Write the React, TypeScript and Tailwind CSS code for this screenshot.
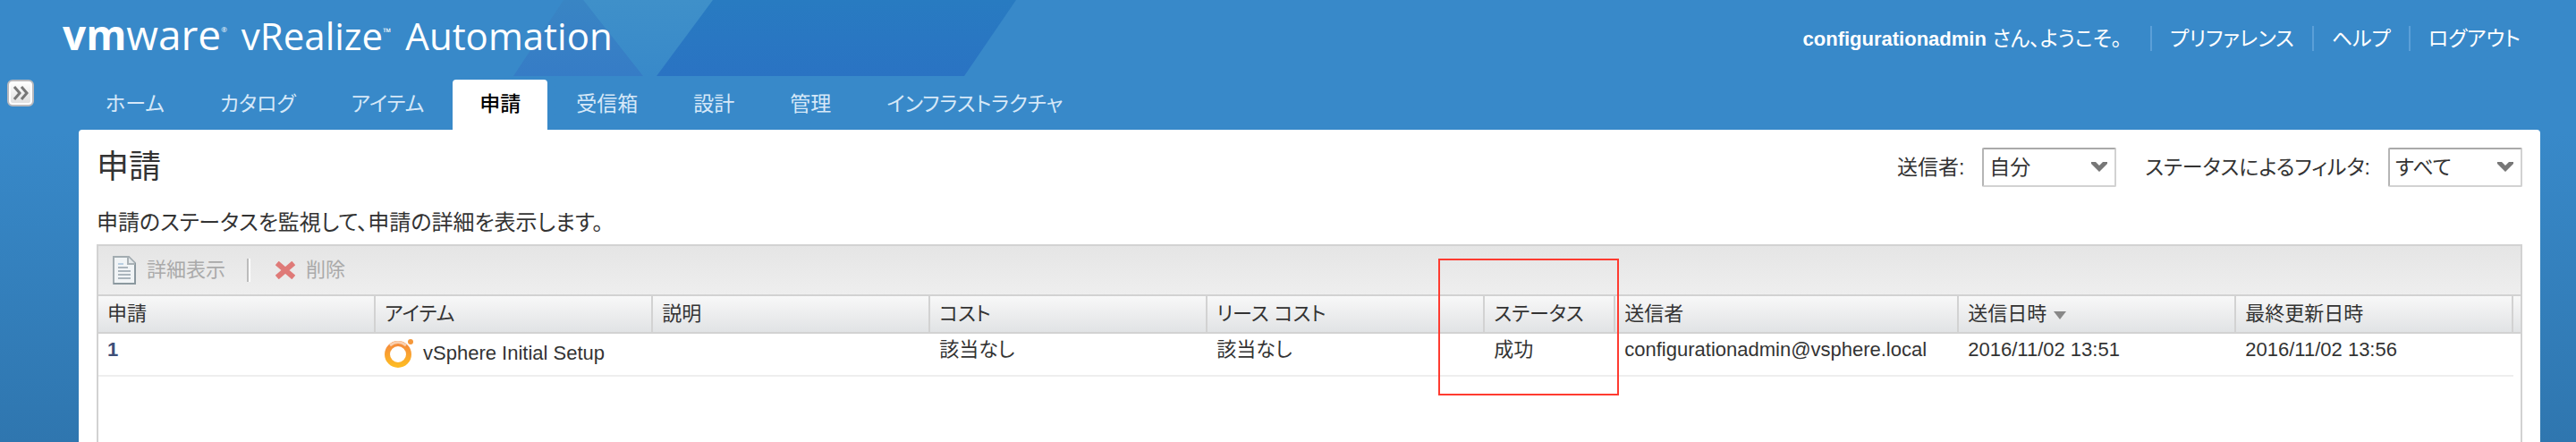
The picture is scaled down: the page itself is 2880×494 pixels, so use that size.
import * as React from "react";

interface Column {
  label: string;
  width: string;
  sorted?: boolean;
  marked?: boolean;
}

const tabs = [
  { label: "ホーム" },
  { label: "カタログ" },
  { label: "アイテム" },
  { label: "申請", active: true },
  { label: "受信箱" },
  { label: "設計" },
  { label: "管理" },
  { label: "インフラストラクチャ" },
];

const columns: Column[] = [
  { label: "申請", width: "w-[11.45%]" },
  { label: "アイテム", width: "w-[11.45%]" },
  { label: "説明", width: "w-[11.45%]" },
  { label: "コスト", width: "w-[11.45%]" },
  { label: "リース コスト", width: "w-[11.45%]" },
  { label: "ステータス", width: "w-[5.39%]", marked: true },
  { label: "送信者", width: "w-[14.18%]" },
  { label: "送信日時", width: "w-[11.45%]", sorted: true },
  { label: "最終更新日時", width: "w-[11.45%]" },
];

const requests = [
  {
    id: "1",
    item: "vSphere Initial Setup",
    description: "",
    cost: "該当なし",
    leaseCost: "該当なし",
    status: "成功",
    submitter: "configurationadmin@vsphere.local",
    submitted: "2016/11/02 13:51",
    updated: "2016/11/02 13:56",
  },
];

function HeaderShapes() {
  return (
    <svg className="absolute top-0 left-[574px]" width="600" height="85" viewBox="0 0 600 85" aria-hidden="true">
      <defs>
        <linearGradient id="small" x1="0" y1="0" x2="0" y2="1">
          <stop offset="0" stopColor="#3985c4" />
          <stop offset="1" stopColor="#367cc6" />
        </linearGradient>
        <linearGradient id="large" x1="0" y1="0" x2="0" y2="1">
          <stop offset="0" stopColor="#287bc1" />
          <stop offset="1" stopColor="#2a73c3" />
        </linearGradient>
        <linearGradient id="light" x1="0" y1="0" x2="0" y2="1">
          <stop offset="0" stopColor="#3f90c9" />
          <stop offset="1" stopColor="#3889c9" />
        </linearGradient>
      </defs>
      <polygon points="78,0 223,0 161,85 145,85" fill="url(#light)" />
      <polygon points="56,0 78,0 145,85 0,85" fill="url(#small)" />
      <polygon points="223,0 562,0 504,85 160,85" fill="url(#large)" />
    </svg>
  );
}

function DocumentIcon() {
  return (
    <svg width="26" height="32" viewBox="0 0 26 32" aria-hidden="true">
      <path d="M1 1H18L25 8V31H1Z" fill="#f1f4f6" stroke="#a3acb1" strokeWidth="2" />
      <path d="M25 8V31H1" fill="none" stroke="#8b989f" strokeWidth="2" />
      <path d="M17 1V9H25" fill="#e4e8ea" stroke="#a9b1b6" strokeWidth="2" />
      <path d="M6 9H12" stroke="#b9cfe2" strokeWidth="2" />
      <path d="M6 13H17M6 17H20M6 21H20M6 25H20" stroke="#abb5bd" strokeWidth="2" />
    </svg>
  );
}

function DeleteIcon() {
  return (
    <svg width="22" height="20" viewBox="0 0 22 20" aria-hidden="true">
      <path d="M4 4L18 16M18 4L4 16" stroke="#df7a78" strokeWidth="6" strokeLinecap="square" />
    </svg>
  );
}

function ItemIcon() {
  return (
    <svg className="shrink-0" width="33" height="32" viewBox="0 0 33 32" aria-hidden="true">
      <defs>
        <linearGradient id="ring" x1="0" y1="0" x2="0" y2="1">
          <stop offset="0" stopColor="#f58a3c" />
          <stop offset="1" stopColor="#fdb924" />
        </linearGradient>
      </defs>
      <circle cx="15" cy="17" r="12" fill="none" stroke="url(#ring)" strokeWidth="6" />
      <path d="M6 7Q15 0 24 7" fill="none" stroke="#f9cfae" strokeWidth="3" />
      <circle cx="29" cy="3" r="3" fill="#f5973a" />
    </svg>
  );
}

interface FilterSelectProps {
  id: string;
  label: string;
  value: string;
}

function FilterSelect({ id, label, value }: Readonly<FilterSelectProps>) {
  return (
    <div className="flex items-center gap-5">
      <label htmlFor={id}>{label}</label>
      <div className="relative">
        <select
          id={id}
          className="block h-11 w-[150px] appearance-none rounded-xs border-2 border-[#d2d2d2] border-t-[#a9a9a9] border-l-[#b5b5b5] bg-white pl-1.5"
        >
          <option>{value}</option>
        </select>
        <svg
          className="pointer-events-none absolute top-4 right-2.5"
          width="18"
          height="11"
          viewBox="0 0 18 11"
          aria-hidden="true"
        >
          <path d="M0 0H5L9 4L13 0H18V2L9 11L0 2Z" fill="#777" />
        </svg>
      </div>
    </div>
  );
}

export default function App() {
  return (
    <div className="flex min-h-screen flex-col bg-linear-to-b from-[#3889c9] from-30% to-[#2f76af] font-['Liberation_Sans','Noto_Sans_CJK_JP',sans-serif] text-2xl text-[#333] [font-feature-settings:'palt']">
      <header className="relative flex h-[89px] justify-between pl-[70px] pr-[62px]">
        <HeaderShapes />
        <div className="relative flex h-[76px] items-baseline font-['Open_Sans',sans-serif] leading-[76px] text-white">
          <span className="text-[46px]">
            <b>vm</b>ware
          </span>
          <sup className="-top-5 text-[8px]">®</sup>
          <span className="ml-4 text-[42px]">vRealize</span>
          <sup className="-top-4 text-[12px]">™</sup>
          <span className="ml-4 text-[42px]">Automation</span>
        </div>
        <div className="flex h-[86px] items-center text-[23px] text-white">
          <span className="pr-8">
            <b className="text-[22px]">configurationadmin</b> さん、ようこそ。
          </span>
          <a href="#preferences" className="border-l-2 border-[#5b9fd8] px-5 leading-7">
            プリファレンス
          </a>
          <a href="#help" className="border-l-2 border-[#5b9fd8] px-5 leading-7">
            ヘルプ
          </a>
          <a href="#logout" className="border-l-2 border-[#5b9fd8] pl-5 leading-7">
            ログアウト
          </a>
        </div>
      </header>

      <div className="flex grow">
        <div className="w-[88px] shrink-0 pl-2">
          <button
            type="button"
            aria-label="展開"
            className="flex size-[30px] items-center justify-center rounded-md border-2 border-[#b9b9bd] bg-linear-to-b from-white to-[#dedede] inset-ring-2 inset-ring-white"
          >
            <svg width="18" height="16" viewBox="0 0 18 16" aria-hidden="true">
              <path d="M2 1L8 8L2 15M10 1L16 8L10 15" fill="none" stroke="#777" strokeWidth="3" />
            </svg>
          </button>
        </div>

        <div className="mr-10 flex min-w-0 grow flex-col">
          <nav className="flex h-14 gap-0.5 text-[23px] text-[#d6e8f8]">
            {tabs.map((tab) => (
              <a
                key={tab.label}
                href="#tab"
                className={
                  tab.active
                    ? "rounded-t-sm bg-white px-[30px] font-medium leading-[54px] text-black"
                    : "px-[30px] leading-[54px]"
                }
              >
                {tab.label}
              </a>
            ))}
          </nav>

          <main className="flex grow flex-col rounded-t-sm bg-white px-5 pt-5">
            <div className="flex items-center justify-between">
              <h1 className="text-4xl leading-[44px]">申請</h1>
              <div className="flex gap-8 text-[23px]">
                <FilterSelect id="submitter" label="送信者:" value="自分" />
                <FilterSelect id="status" label="ステータスによるフィルタ:" value="すべて" />
              </div>
            </div>
            <p className="pt-6 pb-2 leading-8">申請のステータスを監視して、申請の詳細を表示します。</p>

            <section className="grow border-2 border-b-0 border-[#d2d2d2] text-[22px]">
              <div className="flex h-14 items-center border-b-2 border-[#d2d2d2] bg-linear-to-b from-[#e5e5e5] to-[#eee] pl-4 text-[#aaa]">
                <button type="button" disabled className="flex items-center gap-3">
                  <DocumentIcon />
                  詳細表示
                </button>
                <span className="ml-6 h-[26px] w-1 border-r-2 border-l-2 border-r-white border-l-[#bbb]" />
                <button type="button" disabled className="ml-7 flex items-center gap-3">
                  <DeleteIcon />
                  削除
                </button>
              </div>

              <table className="w-full table-fixed border-separate border-spacing-0 text-left leading-7">
                <thead>
                  <tr>
                    {columns.map((column) => (
                      <th
                        key={column.label}
                        className={`relative h-[42px] border-r-2 border-b-2 border-[#d2d2d2] bg-linear-to-b from-[#f8f8f8] to-[#e1e3e5] p-0 pl-2.5 font-normal whitespace-nowrap ${column.width}`}
                      >
                        {column.label}
                        {column.sorted && (
                          <svg className="ml-2 inline" width="14" height="9" viewBox="0 0 14 9" aria-hidden="true">
                            <path d="M0 0H14L7 9Z" fill="#888" />
                          </svg>
                        )}
                        {/* Highlight around the status column */}
                        {column.marked && (
                          <span className="pointer-events-none absolute -top-[42px] -left-[52px] z-10 h-[153px] w-[202px] border-2 border-[#ff3b30]" />
                        )}
                      </th>
                    ))}
                    <th className="border-b-2 border-[#d2d2d2] bg-linear-to-b from-[#f8f8f8] to-[#e1e3e5] p-0" />
                  </tr>
                </thead>
                <tbody>
                  {requests.map((request) => (
                    <tr
                      key={request.id}
                      className="align-top whitespace-nowrap *:h-12 *:border-b-2 *:border-[#eee] *:p-0 *:pt-1 *:pl-2.5"
                    >
                      <td>
                        <a href="#request" className="font-bold text-[#3d4f78]">
                          {request.id}
                        </a>
                      </td>
                      <td>
                        <div className="flex items-center gap-2.5 pt-0.5">
                          <ItemIcon />
                          {request.item}
                        </div>
                      </td>
                      <td>{request.description}</td>
                      <td>{request.cost}</td>
                      <td>{request.leaseCost}</td>
                      <td>{request.status}</td>
                      <td>{request.submitter}</td>
                      <td>{request.submitted}</td>
                      <td>{request.updated}</td>
                    </tr>
                  ))}
                </tbody>
              </table>
            </section>
          </main>
        </div>
      </div>
    </div>
  );
}
